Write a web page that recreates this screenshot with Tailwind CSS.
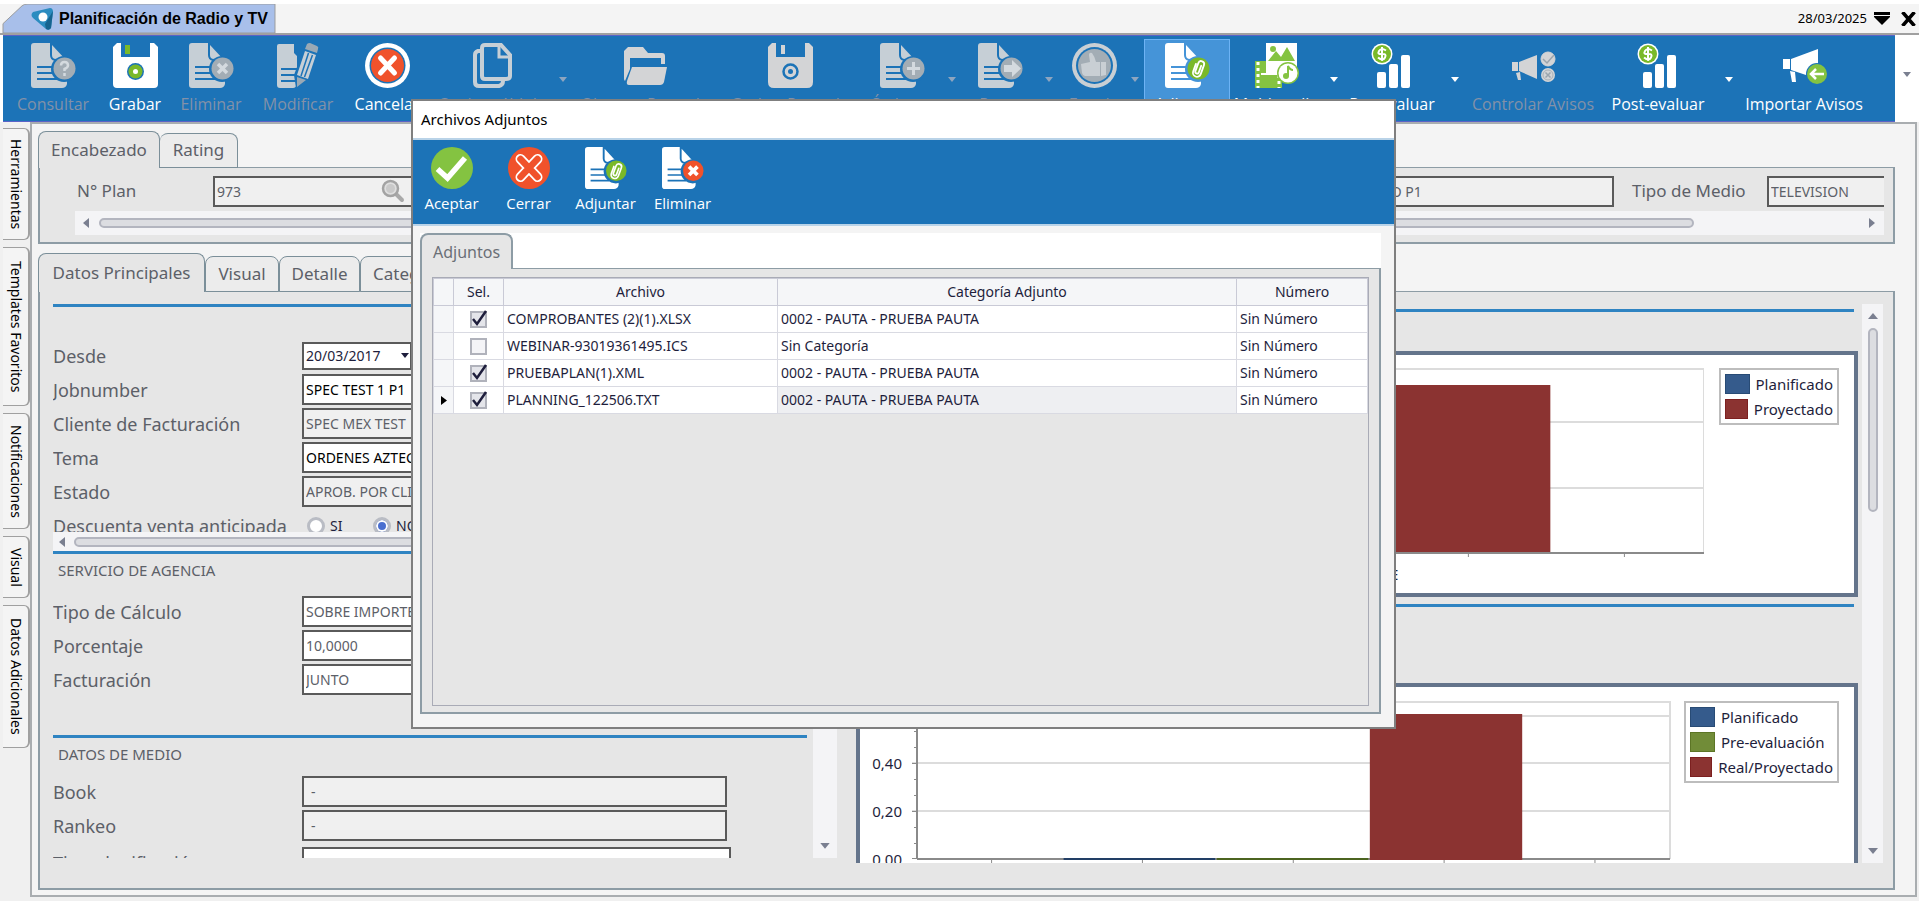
<!DOCTYPE html>
<html lang="es">
<head>
<meta charset="utf-8">
<title>Planificación de Radio y TV</title>
<script src="https://cdn.jsdelivr.net/npm/@tailwindcss/browser@4"></script>
</head>
<body class="relative flex h-screen flex-col overflow-hidden bg-[#f0f0f0] font-['Noto_Sans',sans-serif] text-sm text-[#1e1e3c]">

<svg class="hidden" aria-hidden="true">
  <symbol id="doc" viewBox="0 0 45 45">
    <path fill="currentColor" d="M3 0H19V12Q19 17 24 18H36V41Q35 45 31 45H3Q0 45 0 42V3Q0 0 3 0Z"/>
    <path fill="currentColor" d="M21 2L34 16H25Q21 16 21 12Z"/>
    <path stroke="var(--bg)" stroke-width="1.800" d="M6 24H22M6 30H22M6 36H26"/>
    <circle cx="33" cy="26" r="13" fill="var(--bg)"/>
    <circle cx="33.500" cy="25.500" r="11" fill="var(--badge)"/>
  </symbol>
  <symbol id="clip" viewBox="0 0 45 45">
    <g transform="rotate(20 33.500 25.500)" fill="none" stroke="#fff" stroke-width="1.800" stroke-linecap="round">
      <path d="M29.500 22V30a4 4 0 0 0 8 0V20.500a3 3 0 0 0 -6 0V29a1.800 1.800 0 0 0 3.600 0V22"/>
    </g>
  </symbol>
  <symbol id="bars" viewBox="0 0 45 45">
    <g fill="#fff"><rect x="7" y="29" width="9" height="16" rx="2"/><rect x="19" y="21" width="9" height="24" rx="2"/><rect x="31" y="12" width="9" height="33" rx="2"/></g>
    <circle cx="12" cy="11" r="10.500" fill="#fff"/><circle cx="12" cy="11" r="9" fill="#7ab929"/>
    <path fill="none" stroke="#fff" stroke-width="2" d="M16 7.500Q11 4.500 9 8T12 11T15 14.500T8 14.500M12 4V18"/>
  </symbol>
  <symbol id="down" viewBox="0 0 8 6"><path fill="currentColor" d="M0 0H8L4 5Z"/></symbol>
</svg>

<!-- Document tab strip -->
<header class="flex h-[35px] shrink-0 items-end border-t-4 border-white bg-[#f4f4f4]">
  <div class="relative flex h-[31px] w-[276px] items-center border-b-2 border-[#a0a0a0]">
    <svg class="absolute inset-0 h-full w-full" viewBox="0 0 276 31" preserveAspectRatio="none"><path d="M3 31V21L22 2Q24 0 28 0H275V31Z" fill="#a8bfea" stroke="#9a9a9a" stroke-width="1"/></svg>
    <svg class="relative ml-[31px] h-6 w-[22px]" viewBox="0 0 22 24"><path fill="#2b8cc0" d="M2 5L19 1Q22 1 22 5L20 21Q18 24 15 22L2 11Q-1 8 2 5Z"/><path fill="#17648f" d="M22 4L20 21Q18 24 15 22L14 17Z"/><circle cx="12" cy="10" r="4.500" fill="#fff"/></svg>
    <h1 class="relative ml-[6px] whitespace-nowrap font-['Liberation_Sans',sans-serif] text-base font-bold text-black">Planificación de Radio y TV</h1>
  </div>
  <div class="flex h-[31px] flex-1 items-center justify-end gap-[7px] border-b-2 border-[#a0a0a0] pr-[3px] text-black">
    <span class="text-[13px]">28/03/2025</span>
    <button aria-label="Lista de ventanas"><svg class="h-[13px] w-4" viewBox="0 0 16 13"><path d="M0 0H16V3H0ZM0 4H16V5L8 13L0 5Z"/></svg></button>
    <button aria-label="Cerrar pestaña" class="ml-1"><svg class="h-[14px] w-[15px]" viewBox="0 0 15 14"><path stroke="#000" stroke-width="3.500" d="M1.500 0L13.500 14M13.500 0L1.500 14"/></svg></button>
  </div>
</header>

<!-- Main toolbar -->
<div class="flex h-[87px] shrink-0 bg-white pl-[3px] [--badge:#a3adb5] [--bg:#1c73b7]">
  <nav class="flex flex-1 overflow-hidden border-y border-[#5a63c8] bg-[#1c73b7] font-['Open_Sans',sans-serif] text-base leading-5 whitespace-nowrap text-white">
    <button disabled class="flex w-[100px] flex-col items-center gap-[6px] pt-[7px] text-[#8291a8]">
      <svg class="h-[45px] w-[45px] text-[#c6cfd6]"><use href="#doc"/><path fill="none" stroke="#d4dadf" stroke-width="2.500" d="M30 22.500Q30 19 33.500 19T37 22.500Q37 24.500 33.500 26V28M33.500 30V33"/></svg>Consultar</button>
    <button class="flex w-16 flex-col items-center gap-[6px] pt-[7px]">
      <svg class="h-[45px] w-[45px]" viewBox="0 0 45 45"><path fill="#fff" d="M4 0H8V14H37V0H41L45 4V41Q45 45 41 45H4Q0 45 0 41V4Z"/><rect x="12" y="2" width="5" height="9" fill="#7ab929"/><circle cx="22.500" cy="28.500" r="8.500" fill="#1c73b7"/><circle cx="22.500" cy="28.500" r="7" fill="#7ab929"/><circle cx="22.500" cy="28.500" r="2.500" fill="#fff"/></svg>Grabar</button>
    <button disabled class="flex w-[88px] flex-col items-center gap-[6px] pt-[7px] text-[#8291a8]">
      <svg class="h-[45px] w-[45px] text-[#c6cfd6]"><use href="#doc"/><path stroke="#d4dadf" stroke-width="3.500" d="M29 21L38 30M38 21L29 30"/></svg>Eliminar</button>
    <button disabled class="flex w-[86px] flex-col items-center gap-[6px] pt-[7px] text-[#8291a8]">
      <svg class="h-[45px] w-[45px] text-[#c6cfd6]" viewBox="0 0 45 45"><path fill="currentColor" d="M3 1H18V10L21 13V41Q20 45 17 45H4Q1 45 1 42V3Q1 1 3 1Z"/><path stroke="#1c73b7" stroke-width="2" d="M5 26H22M5 32H22M5 38H22"/><path fill="#1c73b7" d="M30 0L18 32L20 45L32 38L44 6Z"/><path fill="currentColor" d="M29 8L40 12L32 36L21 32Z"/><path stroke="#1c73b7" stroke-width="1.500" d="M32.500 10L25 33M36.500 12L28.500 34"/><path fill="#9aa9b5" d="M31 1Q32 0 34 0L41 3Q43 4 42 6L41 10L29 6ZM21 34L30 37L21 44Z"/></svg>Modificar</button>
    <button class="flex w-[92px] flex-col items-center gap-[6px] pt-[7px]">
      <svg class="h-[45px] w-[45px]" viewBox="0 0 45 45"><circle cx="22.500" cy="22.500" r="22.500" fill="#fff"/><circle cx="22.500" cy="22.500" r="18" fill="#1c73b7"/><circle cx="22.500" cy="22.500" r="16.500" fill="#f0522b"/><path stroke="#fff" stroke-width="5" stroke-linecap="round" d="M15.500 15L29.500 30M29.500 15L15.500 30"/></svg>Cancelar</button>
    <button disabled class="flex w-[118px] flex-col items-center gap-[6px] pt-[7px] text-[#8291a8]">
      <svg class="h-[45px] w-[39px] text-[#c6cfd6]" viewBox="0 0 39 45" fill="none" stroke="currentColor" stroke-width="4"><path d="M8 8H5Q2 9 2 12V39Q2 43 6 43H26Q30 42 30 38"/><path d="M12 2H28L37 12V33Q37 36 33 36H12Q9 36 9 33V5Q9 2 12 2Z"/><path stroke-width="3" d="M26 3V14H37"/></svg>Copia múltiple</button>
    <button disabled aria-label="Más opciones de copia" class="flex w-6 justify-center pt-[41px] text-[#8ea5bf]"><svg class="h-[6px] w-2"><use href="#down"/></svg></button>
    <button disabled class="flex w-[140px] flex-col items-center gap-[6px] pt-[7px] text-[#8291a8]">
      <svg class="h-[45px] w-[45px] text-[#d3d4d6]" viewBox="0 0 45 45"><path fill="currentColor" d="M1 8L5 4H20L25 10H39Q42 10 42 13V21H38V15H7V26L2 38Q1 37 1 36Z"/><path fill="currentColor" d="M9 24H44L41 39Q40 42 37 42H6Q3 42 4 38Z"/></svg>Obtener Pautado</button>
    <button disabled class="flex w-[150px] flex-col items-center gap-[6px] pt-[7px] text-[#8291a8]">
      <svg class="h-[45px] w-[45px]" viewBox="0 0 45 45"><path fill="#d3d4d6" d="M4 0H8V14H37V0H41L45 4V39Q45 45 39 45H6Q0 45 0 39V4Z"/><rect x="13" y="2" width="4" height="9" fill="#d3d4d6"/><circle cx="22.500" cy="28.500" r="7" fill="none" stroke="#1c73b7" stroke-width="2.500"/><circle cx="22.500" cy="28.500" r="2.500" fill="#1c73b7"/></svg>Grabar Pautado</button>
    <button disabled class="flex w-[74px] flex-col items-center gap-[6px] pt-[7px] text-[#8291a8]">
      <svg class="h-[45px] w-[45px] text-[#c6cfd6]"><use href="#doc"/><path stroke="#d4dadf" stroke-width="3" d="M27 25.500H40M33.500 19V32"/></svg>Órdenes</button>
    <button disabled aria-label="Más opciones de órdenes" class="flex w-[26px] justify-center pt-[41px] text-[#8ea5bf]"><svg class="h-[6px] w-2"><use href="#down"/></svg></button>
    <button disabled class="flex w-[70px] flex-col items-center gap-[6px] pt-[7px] text-[#8291a8]">
      <svg class="h-[45px] w-[45px] text-[#c6cfd6]"><use href="#doc"/><path fill="#d4dadf" d="M26 22H34V17L43 25.500L34 34V29H26Z"/></svg>Pasar</button>
    <button disabled aria-label="Más opciones de pasar" class="flex w-7 justify-center pt-[41px] text-[#8ea5bf]"><svg class="h-[6px] w-2"><use href="#down"/></svg></button>
    <button disabled class="flex w-[62px] flex-col items-center gap-[6px] pt-[7px] text-[#8291a8]">
      <svg class="h-[45px] w-[45px]" viewBox="0 0 45 45"><circle cx="22.500" cy="22.500" r="22.500" fill="#c9cfd4"/><circle cx="22.500" cy="22.500" r="18.500" fill="#1c73b7"/><circle cx="22.500" cy="22.500" r="16.500" fill="#a3adb5"/><path fill="#c9cfd4" d="M9 21L18 19L17 12Q17 9 20 10Q23 14 24 19H28V33H13Q11 33 10 30ZM29 19H34V32L29 33Z"/></svg>Estado</button>
    <button disabled aria-label="Más opciones de estado" class="flex w-[19px] justify-center pt-[41px] text-[#8ea5bf]"><svg class="h-[6px] w-2"><use href="#down"/></svg></button>
    <button class="mt-[3px] flex w-[86px] flex-col items-center gap-[6px] border border-[#6db3f5] bg-[#4594d8] pt-[3px] [--badge:#7ab929] [--bg:#4594d8]">
      <svg class="h-[45px] w-[45px] text-white"><use href="#doc"/><use href="#clip"/></svg>Adjuntar</button>
    <button class="flex w-[92px] flex-col items-center gap-[6px] pt-[7px]">
      <svg class="h-[45px] w-[45px]" viewBox="0 0 45 45"><rect x="1" y="18" width="27" height="27" fill="#84c341"/><path stroke="#fff" stroke-width="3" stroke-dasharray="3 3" d="M4 19V45M25 32V45"/><path stroke="#fff" stroke-width="2" d="M7 31H24"/><rect x="12" y="0" width="31" height="30" fill="#fff"/><circle cx="19" cy="6" r="3" fill="#84c341"/><path fill="#84c341" d="M14 18L22 8L27 14L33 4L41 18Z"/><circle cx="34" cy="30" r="11" fill="#84c341"/><circle cx="34" cy="30" r="9.500" fill="#fff"/><path fill="none" stroke="#84c341" stroke-width="2" d="M34 33V23Q36 27 39 27"/><circle cx="32" cy="33" r="3" fill="#84c341"/></svg>Multimedia</button>
    <button aria-label="Más opciones de multimedia" class="flex w-6 justify-center pt-[41px]"><svg class="h-[6px] w-2"><use href="#down"/></svg></button>
    <button class="flex w-[92px] flex-col items-center gap-[6px] pt-[7px]">
      <svg class="h-[45px] w-[45px]"><use href="#bars"/></svg>Pre-evaluar</button>
    <button aria-label="Más opciones de pre-evaluar" class="flex w-[34px] justify-center pt-[41px]"><svg class="h-[6px] w-2"><use href="#down"/></svg></button>
    <button disabled class="flex w-[122px] flex-col items-center gap-[6px] pt-[7px] text-[#8291a8]">
      <svg class="h-[45px] w-[45px]" viewBox="0 0 45 45"><path fill="#d3d4d6" d="M1 19H7V28H1ZM8 19L26 12V36L8 28ZM5 30L9 29L10 37H7Z"/><circle cx="37" cy="16" r="7" fill="#d3d4d6" stroke="#d3d4d6"/><circle cx="37" cy="32" r="7" fill="#d3d4d6"/><circle cx="37" cy="32" r="5" fill="none" stroke="#a9b1b8"/><path fill="none" stroke="#9ba5ae" stroke-width="1.500" d="M32 16L36 20L43 12M34.500 29.500L39.500 34.500M39.500 29.500L34.500 34.500"/></svg>Controlar Avisos</button>
    <button class="flex w-[128px] flex-col items-center gap-[6px] pt-[7px]">
      <svg class="h-[45px] w-[45px]"><use href="#bars"/></svg>Post-evaluar</button>
    <button aria-label="Más opciones de post-evaluar" class="flex w-[13px] justify-center pt-[41px]"><svg class="h-[6px] w-2"><use href="#down"/></svg></button>
    <button class="flex w-[138px] flex-col items-center gap-[6px] pt-[7px]">
      <svg class="h-[45px] w-[45px]" viewBox="0 0 45 45"><path fill="#fff" d="M1 16H8V26H1ZM9 16L36 6V36L9 27ZM8 28L13 29L14 39H10Z"/><circle cx="35" cy="31" r="11" fill="#1c73b7"/><circle cx="35" cy="31" r="10" fill="#84c341"/><path fill="none" stroke="#fff" stroke-width="2.500" d="M42 31H29M34 26L29 31L34 36"/></svg>Importar Avisos</button>
  </nav>
  <button aria-label="Más botones" class="flex w-6 items-center justify-center pb-2 text-[#7a7f90]"><svg class="h-[6px] w-2"><use href="#down"/></svg></button>
</div>

<div class="flex min-h-0 flex-1 pl-[3px]">
  <!-- Docked side tabs -->
  <aside class="flex w-[27px] shrink-0 flex-col gap-[7px] pt-[6px] text-sm leading-5 whitespace-nowrap text-black [&>button]:flex [&>button]:items-center [&>button]:justify-center [&>button]:rounded-r-md [&>button]:border [&>button]:border-l-0 [&>button]:border-r-2 [&>button]:border-[#a0a0a0] [&>button]:bg-[#f4f4f4] [&>button]:[writing-mode:vertical-rl]">
    <button class="h-[112px]">Herramientas</button>
    <button class="h-[159px]">Templates Favoritos</button>
    <button class="h-[116px]">Notificaciones</button>
    <button class="h-[62px]">Visual</button>
    <button class="h-[143px]">Datos Adicionales</button>
  </aside>

  <main class="mr-[2px] mb-[4px] flex min-w-0 flex-1 flex-col border-2 border-[#a9adb0] bg-[#f4f4f4] pt-[7px] pr-[20px] pb-[5px] pl-[6px] text-[17px] text-[#5c6068]">
    <!-- Header data -->
    <div class="z-10 -mb-px flex items-end" role="tablist">
      <button role="tab" aria-selected="true" class="h-[37px] w-[122px] rounded-t-lg border border-b-0 border-[#7b8f99] bg-[#e6e6e6]">Encabezado</button>
      <button role="tab" class="h-[35px] w-[78px] rounded-t-lg border border-l-0 border-[#7b8f99] bg-[#ececec]">Rating</button>
    </div>
    <section class="h-[77px] shrink-0 border-2 border-t border-[#8d9ca5] bg-[#e6e6e6] pt-[8px] pr-[9px] pl-[35px]">
      <div class="flex items-center overflow-hidden">
        <label for="plan" class="w-[138px] pl-[2px]">N° Plan</label>
        <div class="relative w-[200px]">
          <input id="plan" value="973" readonly class="block h-[31px] w-full border-2 border-[#5a5a5a] bg-[#f0f0f0] px-[2px] text-sm">
          <svg class="absolute top-[3px] right-[8px] h-6 w-6" viewBox="0 0 24 24"><path stroke="#a9a9a9" stroke-width="4" stroke-linecap="round" d="M15 15L21 21"/><circle cx="9.500" cy="9.500" r="7.500" fill="#dedede" stroke="#a3a3a3" stroke-width="2.500"/><circle cx="9.500" cy="9.500" r="4.500" fill="#c9c9c9"/></svg>
        </div>
        <input aria-label="Descripción del plan" readonly value="PRUEBA AZTECA UNO P1" class="ml-auto h-[31px] w-[359px] border-2 border-[#5a5a5a] bg-[#f0f0f0] px-[2px] text-sm">
        <label for="medio" class="w-[153px] pl-[18px] whitespace-nowrap">Tipo de Medio</label>
        <input id="medio" readonly value="TELEVISION" class="h-[31px] w-[117px] border-2 border-r-0 border-[#5a5a5a] bg-[#f0f0f0] px-[2px] text-sm">
      </div>
      <div class="mt-[4px] flex h-[24px] items-center bg-[#f4f4f6] pr-[9px] pl-[8px] text-[#7a7f90]">
        <svg class="h-[10px] w-[6px]" viewBox="0 0 6 10"><path fill="currentColor" d="M6 0V10L0 5Z"/></svg>
        <div class="ml-[10px] h-[10px] w-[89%] rounded-full border-2 border-[#b3b5bf] bg-[#dcdde1]"></div>
        <svg class="ml-auto h-[10px] w-[6px]" viewBox="0 0 6 10"><path fill="currentColor" d="M0 0V10L6 5Z"/></svg>
      </div>
    </section>

    <!-- Detail tabs -->
    <div class="z-10 mt-[9px] -mb-px flex items-end [&>button]:rounded-t-lg [&>button]:border [&>button]:border-[#7b8f99]" role="tablist">
      <button role="tab" aria-selected="true" class="h-[39px] w-[167px] border-b-0! bg-[#e6e6e6]">Datos Principales</button>
      <button role="tab" class="h-[36px] w-[74px] bg-[#ececec]">Visual</button>
      <button role="tab" class="h-[36px] w-[81px] bg-[#ececec]">Detalle</button>
      <button role="tab" class="h-[36px] w-[112px] bg-[#ececec]">Categorías</button>
    </div>
    <section class="flex min-h-0 flex-1 overflow-hidden border-2 border-t border-[#8d9ca5] bg-[#e6e6e6] pr-[10px] pl-[13px]">
      <!-- Left form -->
      <div class="flex h-[566px] w-[784px] shrink-0 pt-[12px] text-lg leading-6">
        <div class="mr-[6px] flex min-w-0 flex-1 flex-col overflow-hidden">
          <div class="flex h-[228px] shrink-0 flex-col gap-[3px] overflow-hidden [&>div]:flex [&>div]:shrink-0 [&>div]:items-center">
            <hr class="mb-[30px] h-[3px] shrink-0 border-0 bg-[#2f84c2]">
            <div class="h-[31px]"><label for="desde" class="w-[249px]">Desde</label>
              <div class="relative w-[110px]"><input id="desde" value="20/03/2017" class="block h-[28px] w-full border-2 border-[#5a5a5a] bg-white px-[2px] text-sm text-[#1e1e3c]"><svg class="absolute top-[11px] right-[3px] h-[6px] w-2 text-[#1e1e3c]"><use href="#down"/></svg></div></div>
            <div><label for="job" class="w-[249px]">Jobnumber</label><input id="job" value="SPEC TEST 1 P1" class="h-[31px] w-[425px] border-2 border-[#5a5a5a] bg-white px-[2px] text-sm text-black"></div>
            <div><label for="cli" class="w-[249px]">Cliente de Facturación</label><input id="cli" readonly value="SPEC MEX TEST" class="h-[31px] w-[425px] border-2 border-[#5a5a5a] bg-[#f0f0f0] px-[2px] text-sm"></div>
            <div><label for="tema" class="w-[249px]">Tema</label><input id="tema" value="ORDENES AZTECA" class="h-[31px] w-[425px] border-2 border-[#5a5a5a] bg-white px-[2px] text-sm text-black"></div>
            <div><label for="estado" class="w-[249px]">Estado</label><input id="estado" readonly value="APROB. POR CLIENTE" class="h-[31px] w-[425px] border-2 border-[#5a5a5a] bg-[#f0f0f0] px-[2px] text-sm"></div>
            <div class="h-[32px] gap-[5px] text-sm text-[#1e1e3c]"><span class="w-[249px] text-lg leading-6 text-[#5c6068]">Descuenta venta anticipada</span>
              <input type="radio" id="si" name="dva" class="h-[18px] w-[18px] appearance-none rounded-full border-[3px] border-[#b9bcc4] bg-white"><label for="si" class="w-[38px]">SI</label>
              <input type="radio" id="no" name="dva" checked class="h-[18px] w-[18px] appearance-none rounded-full border-[3px] border-[#b9bcc4] bg-[#4a6fd0] ring-2 ring-white ring-inset"><label for="no">NO</label></div>
          </div>
          <div class="flex h-[19px] shrink-0 items-center bg-[#f4f4f6] pl-[6px] text-[#7a7f90]">
            <svg class="h-[10px] w-[6px]" viewBox="0 0 6 10"><path fill="currentColor" d="M6 0V10L0 5Z"/></svg>
            <div class="ml-[9px] h-[10px] w-[560px] rounded-full border-2 border-[#b3b5bf] bg-[#dcdde1]"></div>
          </div>
          <hr class="h-[3px] shrink-0 border-0 bg-[#2f84c2]">
          <h2 class="mt-[4px] h-[38px] shrink-0 pl-[5px] text-[15px] leading-6">SERVICIO DE AGENCIA</h2>
          <div class="flex shrink-0 flex-col gap-[3px] [&>div]:flex [&>div]:items-center">
            <div><label for="calc" class="w-[249px]">Tipo de Cálculo</label><input id="calc" value="SOBRE IMPORTE" class="h-[31px] w-[425px] border-2 border-[#5a5a5a] bg-white px-[2px] text-sm"></div>
            <div><label for="porc" class="w-[249px]">Porcentaje</label><input id="porc" value="10,0000" class="h-[31px] w-[425px] border-2 border-[#5a5a5a] bg-white px-[2px] text-sm"></div>
            <div><label for="fact" class="w-[249px]">Facturación</label><input id="fact" value="JUNTO" class="h-[31px] w-[425px] border-2 border-[#5a5a5a] bg-white px-[2px] text-sm"></div>
          </div>
          <hr class="mt-[40px] h-[3px] shrink-0 border-0 bg-[#2f84c2]">
          <h2 class="mt-[4px] h-[34px] shrink-0 pl-[5px] text-[15px] leading-6">DATOS DE MEDIO</h2>
          <div class="flex shrink-0 flex-col gap-[3px] [&>div]:flex [&>div]:items-center">
            <div><label for="book" class="w-[249px]">Book</label><input id="book" readonly value="-" class="h-[31px] w-[425px] border-2 border-[#5a5a5a] bg-[#f0f0f0] px-[7px] text-sm"></div>
            <div><label for="rank" class="w-[249px]">Rankeo</label><input id="rank" readonly value="-" class="h-[31px] w-[425px] border-2 border-[#5a5a5a] bg-[#f0f0f0] px-[7px] text-sm"></div>
            <div class="pt-[3px]"><label for="tplan" class="w-[249px]">Tipo planificación</label><input id="tplan" class="h-[31px] w-[429px] border-2 border-[#5a5a5a] bg-white text-sm"></div>
          </div>
        </div>
        <div class="flex w-[24px] items-end justify-center bg-[#f4f4f6] pb-[8px] text-[#7a7f90]"><svg class="h-[7px] w-[10px]"><use href="#down" width="10" height="7"/></svg></div>
      </div>

      <!-- Charts -->
      <div class="ml-[19px] flex h-[571px] min-w-0 flex-1 flex-col overflow-hidden pt-[17px] text-[15px] text-[#1e1e3c]">
        <hr class="mr-[4px] ml-[4px] h-[3px] shrink-0 border-0 bg-[#2f84c2]">
        <div class="mt-[39px] flex h-[246px] shrink-0 gap-[15px] border-4 border-[#64748b] bg-white pt-[13px] pr-[15px] pl-[56px]">
          <svg class="h-[215px] flex-1 text-[15px]">
            <g stroke="#dcdcdc" stroke-width="2"><path d="M0 1H900M0 54H900M0 120H900" /><line x1="100%" x2="100%" y1="0" y2="184"/></g>
            <rect x="60.500%" y="17" width="20%" height="168" fill="#8b3331"/>
            <g stroke="#8a8a8a" stroke-width="2"><line x1="0" x2="100%" y1="185" y2="185"/><line x1="1" x2="1" y1="0" y2="185"/></g>
            <g stroke="#8a8a8a"><line x1="70.100%" x2="70.100%" y1="185" y2="189"/><line x1="89.900%" x2="89.900%" y1="185" y2="189"/></g>
            <text x="61.200%" y="212" text-anchor="end" fill="#1e1e3c">SHARE</text>
          </svg>
          <ul class="flex h-[57px] w-[120px] flex-col gap-[5px] border-2 border-[#bdbdbd] p-[4px] leading-5">
            <li class="flex gap-[6px]"><span class="h-5 w-[25px] border border-[#284b75] bg-[#355b8c]"></span>Planificado</li>
            <li class="flex gap-[6px]"><span class="h-5 w-[25px] border border-[#7c2020] bg-[#8b3331]"></span>Proyectado</li>
          </ul>
        </div>
        <hr class="mt-[7px] mr-[4px] ml-[4px] h-[3px] shrink-0 border-0 bg-[#2f84c2]">
        <div class="mt-[39px] h-[31px] w-[540px] shrink-0 border-2 border-[#5a5a5a] bg-[#f0f0f0]"></div>
        <div class="mt-[6px] flex h-[246px] shrink-0 gap-[14px] border-4 border-[#64748b] bg-white pt-[14px] pr-[15px] pl-[4px]">
          <div class="-mr-[4px] flex w-[38px] shrink-0 flex-col gap-[28px] pt-[52px] text-right leading-5 [&>span]:shrink-0">
            <span>0,40</span><span>0,20</span><span>0,00</span>
          </div>
          <svg class="h-[170px] flex-1 overflow-visible">
            <g stroke="#dcdcdc" stroke-width="2"><line x1="0" x2="100%" y1="1" y2="1"/><line x1="0" x2="100%" y1="15" y2="15"/><line x1="0" x2="100%" y1="62" y2="62"/><line x1="0" x2="100%" y1="110" y2="110"/><line x1="100%" x2="100%" y1="0" y2="158"/></g>
            <g stroke="#8a8a8a"><path stroke-width="2" d="M5 0V158"/><path d="M0 62.500H5M0 110.500H5M0 157.500H5M2 30.500H5M2 46.500H5M2 78.500H5M2 94.500H5M2 126.500H5M2 142.500H5"/><line stroke-width="2" x1="5" x2="100%" y1="158" y2="158"/>
            <line x1="10.500%" x2="10.500%" y1="158" y2="162"/><line x1="30.400%" x2="30.400%" y1="158" y2="162"/><line x1="50.300%" x2="50.300%" y1="158" y2="162"/><line x1="70.200%" x2="70.200%" y1="158" y2="162"/><line x1="90.100%" x2="90.100%" y1="158" y2="162"/></g>
            <rect x="20%" y="157" width="20%" height="2" fill="#223f66"/><rect x="40.200%" y="157" width="20%" height="2" fill="#4c6420"/>
            <rect x="60.400%" y="13" width="20.100%" height="146" fill="#8b3331"/>
          </svg>
          <ul class="flex h-[82px] w-[155px] flex-col gap-[5px] border-2 border-[#bdbdbd] p-[4px] leading-5 whitespace-nowrap">
            <li class="flex gap-[6px]"><span class="h-5 w-[25px] border border-[#284b75] bg-[#355b8c]"></span>Planificado</li>
            <li class="flex gap-[6px]"><span class="h-5 w-[25px] border border-[#5c7526] bg-[#718c38]"></span>Pre-evaluación</li>
            <li class="flex gap-[6px]"><span class="h-5 w-[25px] border border-[#7c2020] bg-[#8b3331]"></span>Real/Proyectado</li>
          </ul>
        </div>
      </div>
      <div class="mt-[12px] ml-[4px] flex h-[559px] w-[21px] flex-col items-center bg-[#f4f4f6] pt-[9px] pb-[9px] text-[#7a7f90]">
        <svg class="h-[6px] w-[10px]" viewBox="0 0 10 6"><path fill="currentColor" d="M0 6H10L5 0Z"/></svg>
        <div class="mt-[9px] h-[184px] w-[10px] rounded-full border-2 border-[#b3b5bf] bg-[#dcdde1]"></div>
        <svg class="mt-auto h-[6px] w-[10px]" viewBox="0 0 10 6"><path fill="currentColor" d="M0 0H10L5 6Z"/></svg>
      </div>
    </section>
  </main>
</div>

<!-- Attachments dialog -->
<div role="dialog" aria-labelledby="dlg" class="absolute top-[99px] left-[411px] z-20 flex h-[630px] w-[985px] flex-col border-2 border-[#7f7f7f] bg-[#f4f4f4]">
  <h2 id="dlg" class="flex h-[37px] shrink-0 items-center bg-white pl-[8px] text-[15px] text-black">Archivos Adjuntos</h2>
  <nav class="flex h-[88px] shrink-0 border-y-2 border-t-[#b9d3e8] border-b-[#b9d3e8] bg-[#1c73b7] font-['Open_Sans',sans-serif] text-[15px] leading-5 text-white [--bg:#1c73b7] [&>button]:flex [&>button]:w-[77px] [&>button]:flex-col [&>button]:items-center [&>button]:gap-[4px] [&>button]:pt-[7px]">
    <button><svg class="h-[42px] w-[42px]" viewBox="0 0 42 42"><circle cx="21" cy="21" r="21" fill="#84c341"/><path fill="none" stroke="#fff" stroke-width="5.500" d="M6.500 22L16.500 31L34 11"/></svg>Aceptar</button>
    <button><svg class="h-[42px] w-[42px]" viewBox="0 0 42 42"><circle cx="21" cy="21" r="21" fill="#f0522b"/><g stroke-linecap="round"><path stroke="#fff" stroke-width="10" d="M12.500 12L29.500 30M29.500 12L12.500 30"/><path stroke="#f0522b" stroke-width="6.500" d="M12.500 12L29.500 30M29.500 12L12.500 30"/></g></svg>Cerrar</button>
    <button class="[--badge:#7ab929]"><svg class="h-[42px] w-[42px] text-white" viewBox="0 0 45 45"><use href="#doc" width="45" height="45"/><use href="#clip" width="45" height="45"/></svg>Adjuntar</button>
    <button class="[--badge:#f0522b]"><svg class="h-[42px] w-[42px] text-white" viewBox="0 0 45 45"><use href="#doc" width="45" height="45"/><path stroke="#fff" stroke-width="4" d="M29 21L38 30M38 21L29 30"/></svg>Eliminar</button>
  </nav>
  <div class="mt-[7px] mr-[13px] mb-[13px] ml-[7px] flex min-h-0 flex-1 flex-col">
    <div class="flex h-[35px] shrink-0 bg-white" role="tablist"><button role="tab" aria-selected="true" class="z-10 -mb-px w-[93px] rounded-t-lg border-2 border-b-0 border-[#8d9ca5] bg-[#e6e6e6] text-base text-[#6b6f76]">Adjuntos</button></div>
    <div class="flex-1 border-2 border-t border-[#8d9ca5] bg-[#e6e6e6] px-[10px] pt-[8px] pb-[6px]">
      <div class="h-full border border-[#a9abb6]">
        <table class="w-full table-fixed border-collapse text-sm leading-5 [&_td]:border [&_td]:border-[#d9dae2] [&_td]:px-[3px] [&_th]:border [&_th]:border-[#c9cad6] [&_th]:font-normal [&_tr]:h-[27px]">
          <colgroup><col class="w-[20px]"><col class="w-[50px]"><col class="w-[274px]"><col><col class="w-[131px]"></colgroup>
          <thead class="bg-[#f5f6f8]"><tr><th></th><th>Sel.</th><th>Archivo</th><th>Categoría Adjunto</th><th>Número</th></tr></thead>
          <tbody class="bg-white">
            <tr><td class="bg-[#f5f6f8]"></td><td><label class="mx-auto grid w-[17px] place-items-center"><input type="checkbox" checked aria-label="Comprobantes" class="peer col-start-1 row-start-1 h-[17px] w-[17px] appearance-none border-2 border-[#b0b2bb] bg-[#e4e5ea]"><svg class="col-start-1 row-start-1 hidden h-[17px] w-[17px] overflow-visible peer-checked:block" viewBox="0 0 17 17"><path fill="none" stroke="#1e1e3c" stroke-width="2.500" d="M3 8L7 13L16 0"/></svg></label></td><td>COMPROBANTES (2)(1).XLSX</td><td>0002 - PAUTA - PRUEBA PAUTA</td><td>Sin Número</td></tr>
            <tr><td class="bg-[#f5f6f8]"></td><td><label class="mx-auto grid w-[17px] place-items-center"><input type="checkbox" aria-label="Webinar" class="col-start-1 row-start-1 h-[17px] w-[17px] appearance-none border-2 border-[#b0b2bb] bg-[#f4f4f7]"></label></td><td>WEBINAR-93019361495.ICS</td><td>Sin Categoría</td><td>Sin Número</td></tr>
            <tr><td class="bg-[#f5f6f8]"></td><td><label class="mx-auto grid w-[17px] place-items-center"><input type="checkbox" checked aria-label="Pruebaplan" class="peer col-start-1 row-start-1 h-[17px] w-[17px] appearance-none border-2 border-[#b0b2bb] bg-[#e4e5ea]"><svg class="col-start-1 row-start-1 hidden h-[17px] w-[17px] overflow-visible peer-checked:block" viewBox="0 0 17 17"><path fill="none" stroke="#1e1e3c" stroke-width="2.500" d="M3 8L7 13L16 0"/></svg></label></td><td>PRUEBAPLAN(1).XML</td><td>0002 - PAUTA - PRUEBA PAUTA</td><td>Sin Número</td></tr>
            <tr><td class="bg-[#f5f6f8]"><svg class="mx-auto h-[9px] w-[6px]" viewBox="0 0 6 9"><path d="M0 0V9L6 4.500Z"/></svg></td><td><label class="mx-auto grid w-[17px] place-items-center"><input type="checkbox" checked aria-label="Planning" class="peer col-start-1 row-start-1 h-[17px] w-[17px] appearance-none border-2 border-[#b0b2bb] bg-[#e4e5ea]"><svg class="col-start-1 row-start-1 hidden h-[17px] w-[17px] overflow-visible peer-checked:block" viewBox="0 0 17 17"><path fill="none" stroke="#1e1e3c" stroke-width="2.500" d="M3 8L7 13L16 0"/></svg></label></td><td>PLANNING_122506.TXT</td><td class="bg-[#eeeff2]">0002 - PAUTA - PRUEBA PAUTA</td><td>Sin Número</td></tr>
          </tbody>
        </table>
      </div>
    </div>
  </div>
</div>
</body>
</html>
